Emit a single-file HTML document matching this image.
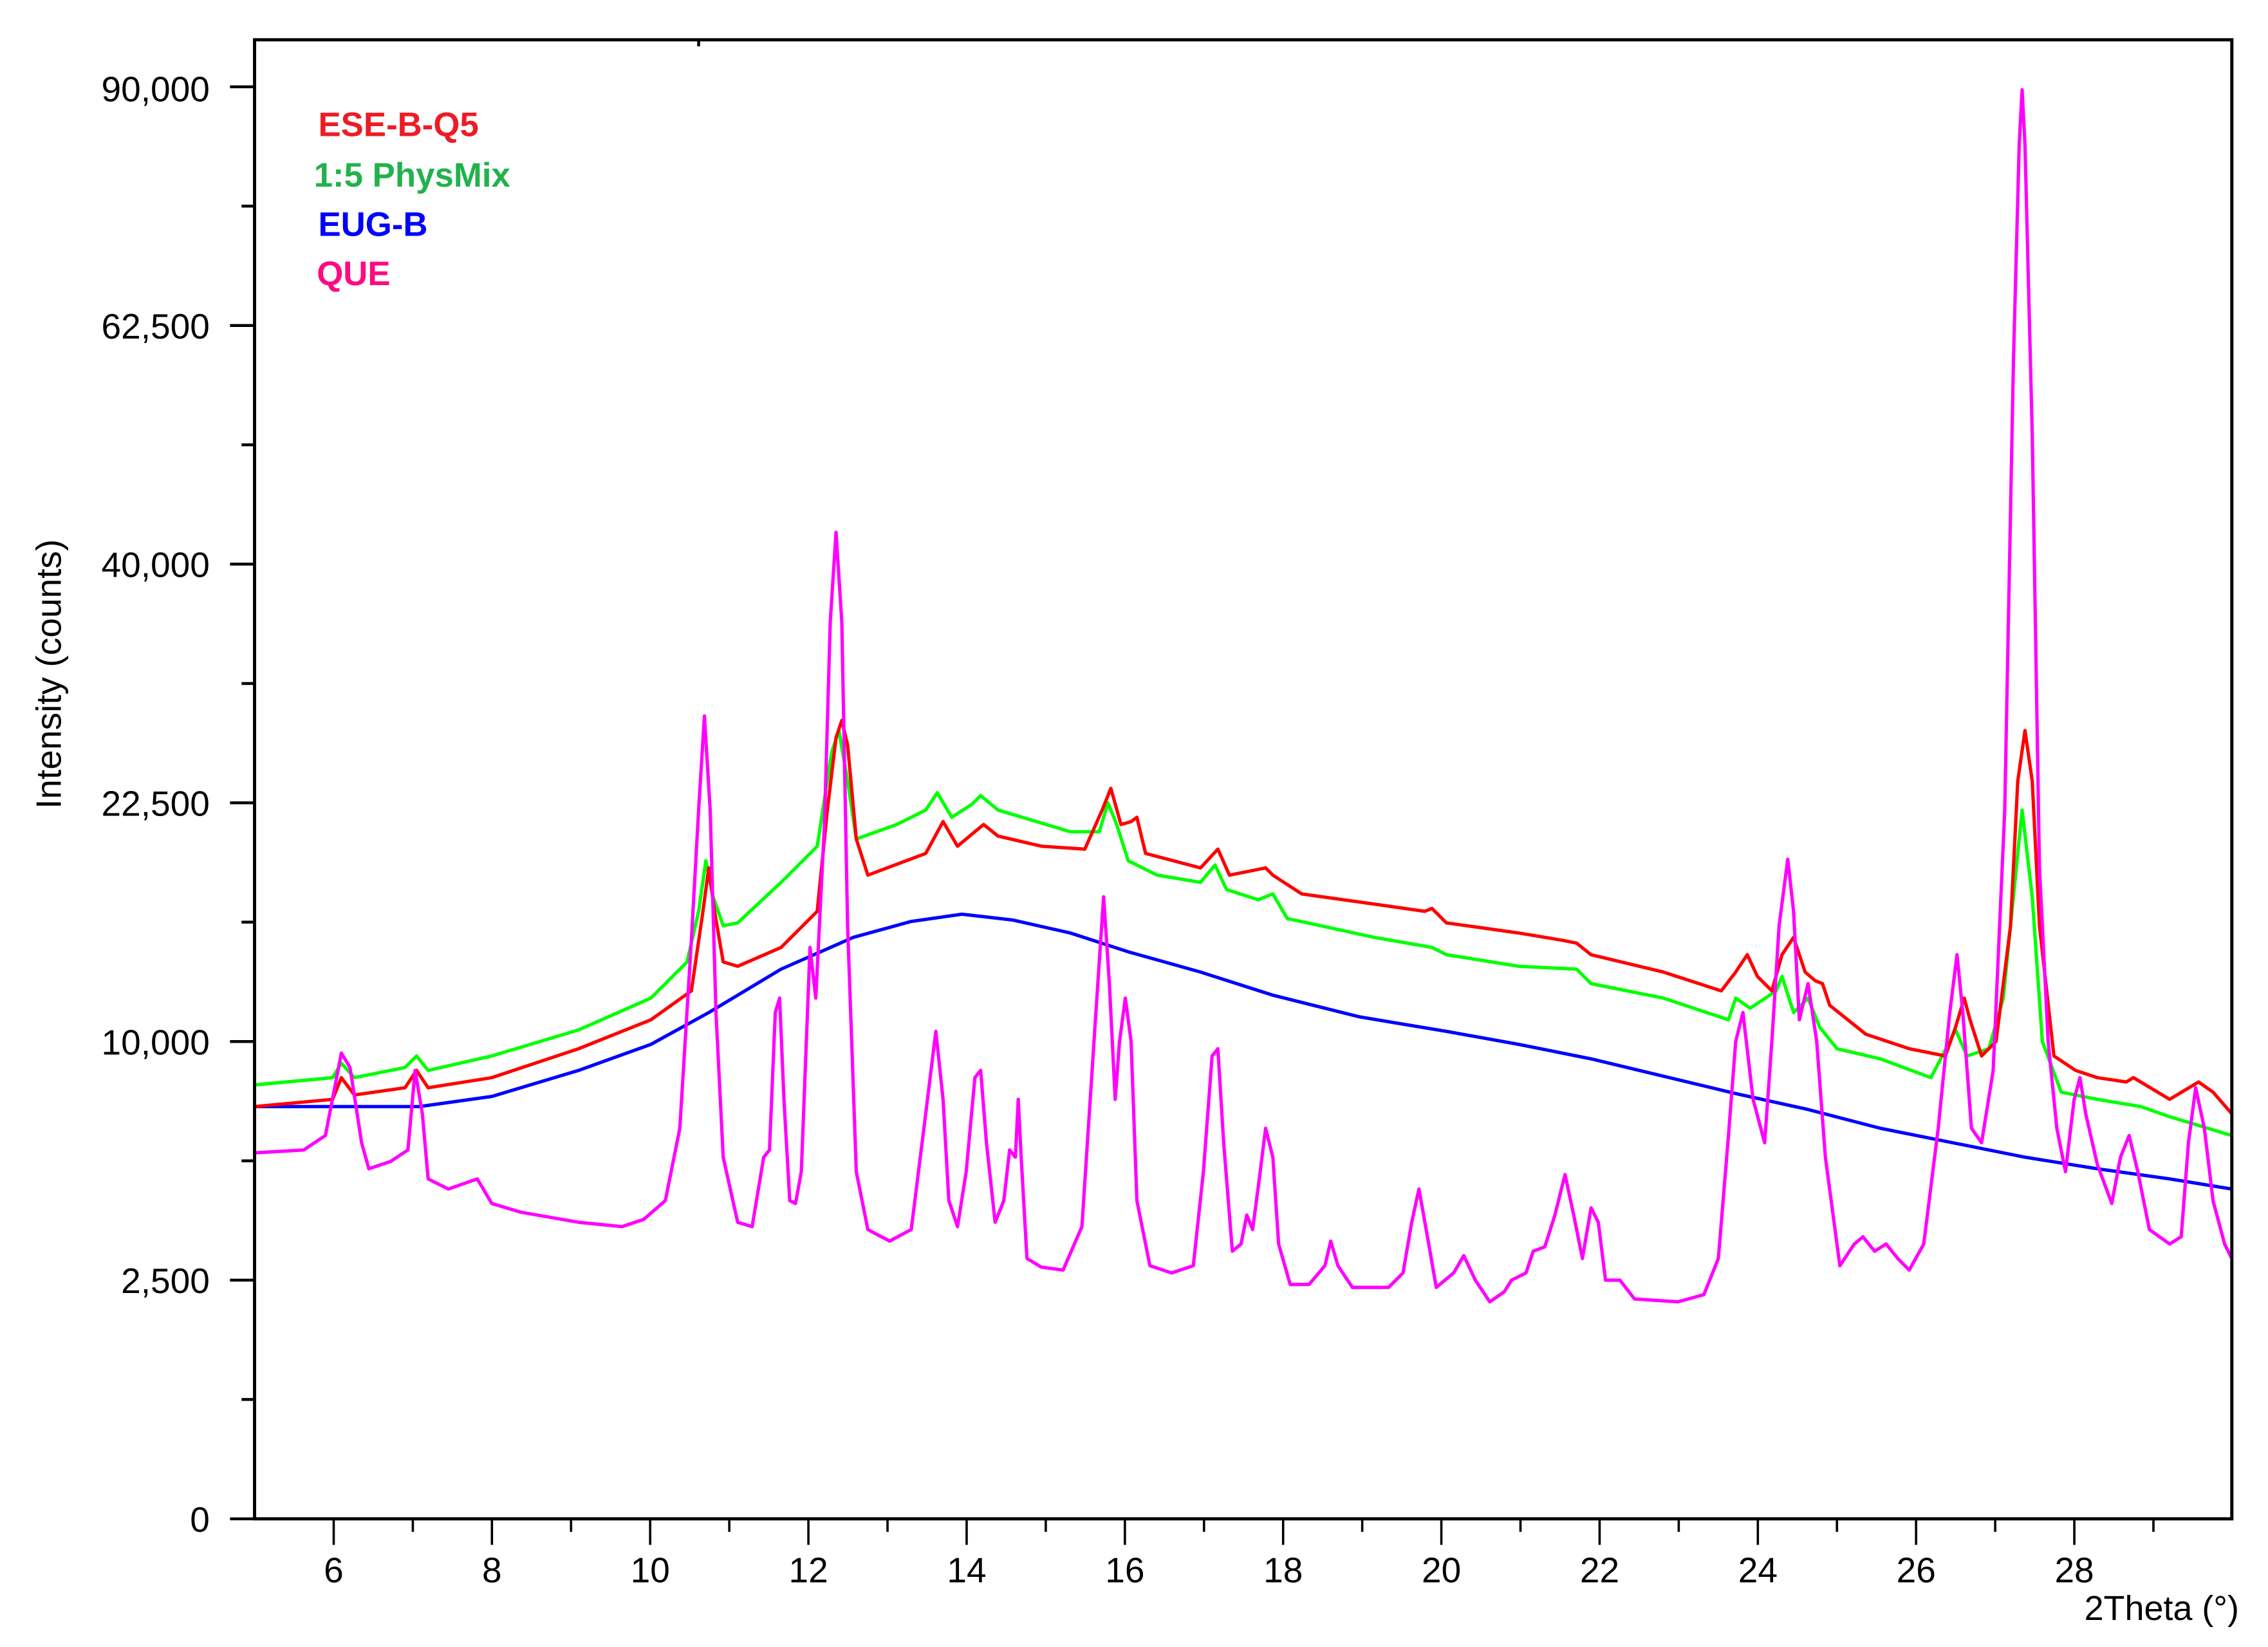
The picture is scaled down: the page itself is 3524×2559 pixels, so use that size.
<!DOCTYPE html>
<html><head><meta charset="utf-8"><style>
html,body{margin:0;padding:0;background:#fff;}
svg{display:block;}
text{font-family:"Liberation Sans",Arial,sans-serif;}
</style></head><body>
<svg width="3524" height="2559" viewBox="0 0 1568 1138.6" xmlns="http://www.w3.org/2000/svg">
<rect width="1568" height="1139" fill="#fff"/>
<g fill="none" stroke-width="2.3" stroke-linejoin="round">
<polyline stroke="#0000ff" points="176,765 290,765 340,758 400,740 450,722 490,700 540,670 590,648 630,637 665,632 700,636 740,645 780,658 830,672 880,688 940,703 1000,713 1050,722 1100,732 1150,744 1200,756 1250,767 1300,780 1350,790 1400,800 1450,808 1500,815 1543,822"/>
<polyline stroke="#00ff00" points="176,750 230,745 236,735 245,745 280,738 288,730 296,740 340,730 400,712 450,690 475,665 483,630 488,595 493,620 500,640 510,638 540,610 565,585 575,520 580,505 586,540 592,580 620,570 640,560 648,548 658,565 672,556 678,550 690,560 700,563 740,575 760,575 766,555 772,570 780,595 800,605 830,610 840,598 848,615 870,622 880,618 890,635 950,648 990,655 1000,660 1050,668 1090,670 1100,680 1150,690 1195,705 1200,690 1210,697 1228,685 1232,675 1240,700 1250,690 1258,710 1270,725 1300,732 1335,745 1352,712 1360,730 1375,725 1385,690 1392,620 1398,560 1405,620 1412,720 1425,755 1450,760 1480,765 1500,772 1543,785"/>
<polyline stroke="#ff0000" points="176,765 230,760 236,745 245,757 280,752 288,740 296,752 340,745 400,725 450,705 478,685 486,630 490,600 494,630 500,665 510,668 540,655 565,630 572,560 578,510 582,498 586,515 592,580 600,605 640,590 652,568 662,585 680,570 690,578 720,585 750,587 762,560 768,545 775,570 782,568 786,565 792,590 830,600 842,587 850,605 875,600 880,605 900,618 950,625 985,630 990,628 1000,638 1050,645 1080,650 1090,652 1100,660 1150,672 1190,685 1200,672 1208,660 1215,675 1225,685 1232,660 1240,648 1248,672 1255,678 1260,680 1265,695 1290,715 1320,725 1345,730 1352,710 1358,690 1362,705 1370,730 1380,720 1390,640 1395,540 1400,505 1405,540 1410,640 1420,730 1435,740 1450,745 1470,748 1475,745 1500,760 1520,748 1530,755 1543,770"/>
<polyline stroke="#ff00ff" points="176,797 210,795 225,785 236,728 242,738 250,790 255,808 270,803 282,795 287,740 292,770 296,815 310,822 330,815 340,832 360,838 400,845 430,848 445,843 460,830 470,780 478,650 483,560 487,495 491,560 495,700 500,800 510,845 520,848 528,800 532,795 536,700 539,690 542,760 546,830 550,832 554,810 560,655 564,690 570,570 574,430 578,368 582,430 586,640 592,810 600,850 615,858 630,850 640,770 647,713 652,760 656,830 662,848 668,810 674,745 678,740 682,790 688,845 694,830 698,795 702,800 704,760 706,800 710,870 720,876 735,878 748,848 757,710 763,620 767,680 771,760 774,720 778,690 782,720 786,830 795,875 810,880 825,875 832,810 838,730 842,725 846,790 852,865 858,860 862,840 866,850 870,820 875,780 880,800 884,860 892,888 905,888 916,875 920,858 925,875 935,890 960,890 970,880 976,845 981,822 986,850 993,890 1005,880 1012,868 1020,885 1030,900 1040,893 1045,885 1055,880 1060,865 1068,862 1075,840 1082,812 1088,840 1094,870 1100,835 1105,845 1110,885 1120,885 1130,898 1160,900 1178,895 1188,870 1195,785 1200,720 1205,700 1212,760 1220,790 1225,720 1230,640 1236,594 1240,630 1244,705 1250,680 1256,720 1262,800 1272,875 1282,860 1288,855 1296,865 1304,860 1312,870 1320,878 1330,860 1340,780 1348,700 1353,660 1357,700 1363,780 1370,790 1378,740 1386,560 1392,250 1396,100 1398,62 1400,100 1405,300 1410,600 1416,720 1422,780 1428,810 1434,760 1438,745 1442,770 1450,805 1460,832 1466,800 1472,785 1478,810 1486,850 1500,860 1508,855 1513,790 1518,752 1524,780 1530,830 1538,860 1543,870"/>
</g>
<rect x="176" y="27.5" width="1367" height="1022.5" fill="none" stroke="#000" stroke-width="2.2"/>
<g stroke="#000" stroke-width="2">
<line x1="159" y1="1050" x2="176" y2="1050"/><line x1="159" y1="885" x2="176" y2="885"/><line x1="159" y1="720" x2="176" y2="720"/><line x1="159" y1="555" x2="176" y2="555"/><line x1="159" y1="390" x2="176" y2="390"/><line x1="159" y1="225" x2="176" y2="225"/><line x1="159" y1="60" x2="176" y2="60"/>
<line x1="167" y1="967.5" x2="176" y2="967.5"/><line x1="167" y1="802.5" x2="176" y2="802.5"/><line x1="167" y1="637.5" x2="176" y2="637.5"/><line x1="167" y1="472.5" x2="176" y2="472.5"/><line x1="167" y1="307.5" x2="176" y2="307.5"/><line x1="167" y1="142.5" x2="176" y2="142.5"/>
<line x1="483" y1="27" x2="483" y2="32"/>
</g>
<g stroke="#000" stroke-width="1.6">
<line x1="230.7" y1="1050" x2="230.7" y2="1068"/><line x1="340.1" y1="1050" x2="340.1" y2="1068"/><line x1="449.5" y1="1050" x2="449.5" y2="1068"/><line x1="558.9" y1="1050" x2="558.9" y2="1068"/><line x1="668.3" y1="1050" x2="668.3" y2="1068"/><line x1="777.7" y1="1050" x2="777.7" y2="1068"/><line x1="887.1" y1="1050" x2="887.1" y2="1068"/><line x1="996.5" y1="1050" x2="996.5" y2="1068"/><line x1="1105.9" y1="1050" x2="1105.9" y2="1068"/><line x1="1215.3" y1="1050" x2="1215.3" y2="1068"/><line x1="1324.7" y1="1050" x2="1324.7" y2="1068"/><line x1="1434.1" y1="1050" x2="1434.1" y2="1068"/>
<line x1="285.4" y1="1050" x2="285.4" y2="1059"/><line x1="394.8" y1="1050" x2="394.8" y2="1059"/><line x1="504.2" y1="1050" x2="504.2" y2="1059"/><line x1="613.6" y1="1050" x2="613.6" y2="1059"/><line x1="723" y1="1050" x2="723" y2="1059"/><line x1="832.4" y1="1050" x2="832.4" y2="1059"/><line x1="941.8" y1="1050" x2="941.8" y2="1059"/><line x1="1051.2" y1="1050" x2="1051.2" y2="1059"/><line x1="1160.6" y1="1050" x2="1160.6" y2="1059"/><line x1="1270" y1="1050" x2="1270" y2="1059"/><line x1="1379.4" y1="1050" x2="1379.4" y2="1059"/><line x1="1488.8" y1="1050" x2="1488.8" y2="1059"/>
</g>
<g font-size="24.5" text-anchor="end" fill="#000">
<text x="145" y="1059">0</text><text x="145" y="894">2,500</text><text x="145" y="729">10,000</text><text x="145" y="564">22,500</text><text x="145" y="399">40,000</text><text x="145" y="234">62,500</text><text x="145" y="70">90,000</text>
</g>
<g font-size="24.5" text-anchor="middle" fill="#000">
<text x="230.7" y="1094">6</text><text x="340.1" y="1094">8</text><text x="449.5" y="1094">10</text><text x="558.9" y="1094">12</text><text x="668.3" y="1094">14</text><text x="777.7" y="1094">16</text><text x="887.1" y="1094">18</text><text x="996.5" y="1094">20</text><text x="1105.9" y="1094">22</text><text x="1215.3" y="1094">24</text><text x="1324.7" y="1094">26</text><text x="1434.1" y="1094">28</text>
</g>
<text x="1441" y="1120" font-size="24" fill="#000">2Theta (°)</text>
<text transform="translate(42,466) rotate(-90)" font-size="24.5" text-anchor="middle" fill="#000">Intensity (counts)</text>
<g font-size="23.5" font-weight="bold">
<text x="220" y="94" fill="#ed1c24">ESE-B-Q5</text>
<text x="217" y="129" fill="#22b14c">1:5 PhysMix</text>
<text x="220" y="163" fill="#0000ff">EUG-B</text>
<text x="219" y="197" fill="#ff0a80">QUE</text>
</g>
</svg>
</body></html>
